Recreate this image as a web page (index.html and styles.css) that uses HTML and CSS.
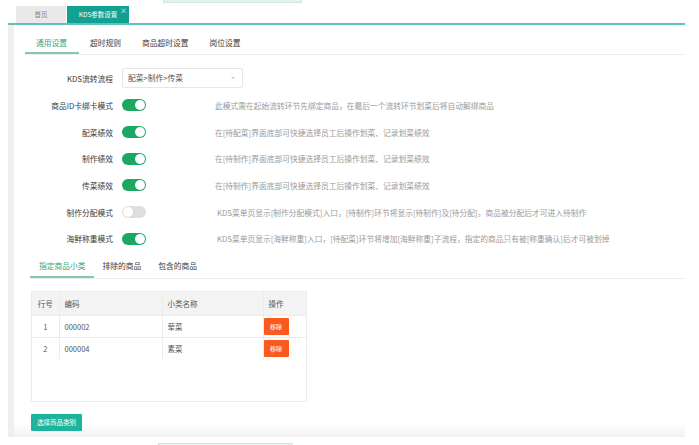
FILE: index.html
```html
<!DOCTYPE html>
<html lang="zh-CN">
<head>
<meta charset="utf-8">
<title>KDS参数设置</title>
<link rel="stylesheet" href="styles.css">
</head>
<body>
<div class="ghost ghost-top"></div>
<div class="page">
  <div class="tabbar">
    <div class="tab">首页</div>
    <div class="tab tab-active">KDS参数设置<span class="tab-close">×</span></div>
  </div>
  <div class="panel">
    <div class="subtabs">
      <div class="subtab subtab-active">通用设置</div>
      <div class="subtab">超时规则</div>
      <div class="subtab">商品超时设置</div>
      <div class="subtab">岗位设置</div>
    </div>

    <div class="form">
      <div class="row row-first">
        <div class="label">KDS流转流程</div>
        <div class="select">配菜&gt;制作&gt;传菜<span class="caret"></span></div>
      </div>
      <div class="row">
        <div class="label">商品ID卡绑卡模式</div>
        <div class="ctrl"><span class="switch on"></span></div>
        <div class="desc">此模式需在起始流转环节先绑定商品，在最后一个流转环节划菜后将自动解绑商品</div>
      </div>
      <div class="row">
        <div class="label">配菜绩效</div>
        <div class="ctrl"><span class="switch on"></span></div>
        <div class="desc">在[待配菜]界面底部可快捷选择员工后操作划菜、记录划菜绩效</div>
      </div>
      <div class="row">
        <div class="label">制作绩效</div>
        <div class="ctrl"><span class="switch on"></span></div>
        <div class="desc">在[待制作]界面底部可快捷选择员工后操作划菜、记录划菜绩效</div>
      </div>
      <div class="row">
        <div class="label">传菜绩效</div>
        <div class="ctrl"><span class="switch on"></span></div>
        <div class="desc">在[待制作]界面底部可快捷选择员工后操作划菜、记录划菜绩效</div>
      </div>
      <div class="row">
        <div class="label">制作分配模式</div>
        <div class="ctrl"><span class="switch"></span></div>
        <div class="desc desc-kds">KDS菜单页显示[制作分配模式]入口，[待制作]环节将显示[待制作]及[待分配]，商品被分配后才可进入待制作</div>
      </div>
      <div class="row">
        <div class="label">海鲜称重模式</div>
        <div class="ctrl"><span class="switch on"></span></div>
        <div class="desc desc-kds">KDS菜单页显示[海鲜称重]入口，[待配菜]环节将增加[海鲜称重]子流程，指定的商品只有被[称重确认]后才可被划掉</div>
      </div>
    </div>

    <div class="section">
      <div class="tabs2">
        <div class="tab2 tab2-active">指定商品小类</div>
        <div class="tab2">排除的商品</div>
        <div class="tab2">包含的商品</div>
      </div>

      <div class="grid-box">
        <table class="grid">
          <thead>
            <tr>
              <th class="c-no">行号</th>
              <th class="c-code">编码</th>
              <th class="c-name">小类名称</th>
              <th class="c-op">操作</th>
            </tr>
          </thead>
          <tbody>
            <tr>
              <td class="c-no">1</td>
              <td class="c-code">000002</td>
              <td class="c-name">荤菜</td>
              <td class="c-op"><span class="btn-remove">移除</span></td>
            </tr>
            <tr>
              <td class="c-no">2</td>
              <td class="c-code">000004</td>
              <td class="c-name">素菜</td>
              <td class="c-op"><span class="btn-remove">移除</span></td>
            </tr>
          </tbody>
        </table>
      </div>

      <div class="btn-select">选择商品类别</div>
    </div>
  </div>
</div>
<div class="ghost ghost-bottom"></div>
</body>
</html>
```

FILE: styles.css
```css
* { box-sizing: border-box; }

html, body {
  margin: 0;
  padding: 0;
  background: #ffffff;
}

body {
  width: 699px;
  height: 445px;
  overflow: hidden;
  position: relative;
  font-family: "Noto Sans CJK SC", "Noto Sans", sans-serif;
  color: #333;
}

.ghost {
  position: absolute;
  background: #e3f1f0;
  border: 1px solid #cfe6e4;
}
.ghost-top {
  left: 163px;
  top: -3px;
  width: 139px;
  height: 6px;
}
.ghost-bottom {
  left: 158px;
  top: 443px;
  width: 135px;
  height: 6px;
}

.page {
  margin-left: 8px;
  width: 677px;
}

/* top tabs */
.tabbar {
  height: 25px;
  padding: 6px 0 0 8px;
  display: flex;
  gap: 1px;
  border-bottom: 2px solid #62c0b7;
}
.tab {
  height: 17px;
  width: 50px;
  background: #e9e9e9;
  color: #888;
  font-size: 6.5px;
  line-height: 17px;
  text-align: center;
}
.tab-active {
  width: 62px;
  background: #12a092;
  color: #fff;
  position: relative;
}
.tab-close {
  position: absolute;
  right: 2px;
  top: -4px;
  font-size: 7px;
  color: #fff;
}

/* panel */
.panel {
  height: 412px;
  border-left: 6px solid #efefef;
  background: linear-gradient(to bottom, #ffffff 0, #ffffff calc(100% - 15px), #f2f2f2 100%);
}

.subtabs {
  margin-left: 11px;
  height: 30px;
  display: flex;
  border-bottom: 1px solid #ececec;
}
.subtab {
  height: 29px;
  padding: 9px 10px 0;
  font-size: 7.75px;
  line-height: 18px;
  color: #3a3a3a;
}
.subtab + .subtab { margin-left: 1px; }
.subtab-active {
  padding: 9px 12px 0 11px;
  color: #35a57c;
  border-bottom: 2px solid #7fcbb0;
}

/* form */
.form {
  margin-top: 9px;
}
.row {
  height: 26.7px;
  display: flex;
  align-items: center;
  font-size: 7.75px;
}
.row-first { height: 28px; }
.label {
  width: 99px;
  text-align: right;
  color: #3a3a3a;
  white-space: nowrap;
}
.select {
  margin-left: 9px;
  width: 121px;
  height: 20px;
  border: 1px solid #e6e6e6;
  border-radius: 2px;
  padding-left: 5px;
  line-height: 18px;
  color: #555;
  position: relative;
  display: flex;
  align-items: center;
  justify-content: space-between;
  padding-right: 7px;
}
.caret {
  width: 0;
  height: 0;
  border-left: 2.5px solid transparent;
  border-right: 2.5px solid transparent;
  border-top: 2.5px solid #c8c8c8;
}
.ctrl {
  margin-left: 9px;
  width: 93px;
  display: flex;
  align-items: center;
}
.switch {
  width: 24px;
  height: 12px;
  border-radius: 6px;
  background: #dedede;
  position: relative;
  display: block;
}
.switch::after {
  content: "";
  position: absolute;
  top: 1px;
  left: 1px;
  width: 10px;
  height: 10px;
  border-radius: 50%;
  background: #fff;
}
.switch.on { background: #1aa862; }
.switch.on::after { left: 13px; }

.desc {
  color: #9a9a9a;
  font-size: 7.75px;
  white-space: nowrap;
}
.desc-kds { padding-left: 2px; }

/* section */
.section {
  padding-left: 16px;
}
.tabs2 {
  height: 27px;
  display: flex;
  border-bottom: 1px solid #ececec;
}
.tab2 {
  height: 26px;
  padding: 6px 8px 0 9px;
  font-size: 7.75px;
  line-height: 16px;
  color: #3a3a3a;
}
.tab2-active {
  color: #35a57c;
  border-bottom: 2px solid #7fcbb0;
}

.grid-box {
  margin: 12px 0 0 1px;
  width: 276px;
  height: 111px;
  border: 1px solid #ececec;
}
.grid {
  width: 100%;
  border-collapse: collapse;
  table-layout: fixed;
  font-size: 7.5px;
  color: #555;
}
.grid th {
  height: 23px;
  background: #f3f3f3;
  font-weight: normal;
  text-align: left;
  padding: 0 0 0 5px;
  color: #555;
  border-right: 1px solid #ececec;
}
.grid td {
  height: 22px;
  padding: 0 0 0 5px;
  border-top: 1px solid #ececec;
  border-right: 1px solid #ececec;
}
.grid th:last-child, .grid td:last-child { border-right: none; }
.grid .c-no { width: 27px; text-align: center; padding: 0; }
.grid .c-code { width: 103px; }
.grid .c-name { width: 101px; }
.grid td.c-op { padding-left: 0; }
.grid th.c-op { padding-left: 5px; }

.btn-remove {
  display: inline-block;
  width: 25px;
  height: 17px;
  line-height: 17px;
  text-align: center;
  background: #fb5a1e;
  color: #fff;
  font-size: 6px;
  border-radius: 1px;
  vertical-align: middle;
}

.btn-select {
  margin: 12px 0 0 1px;
  width: 51px;
  height: 17px;
  line-height: 17px;
  text-align: center;
  background: #1eb39d;
  color: #fff;
  font-size: 6.5px;
  border-radius: 1px;
}
```
